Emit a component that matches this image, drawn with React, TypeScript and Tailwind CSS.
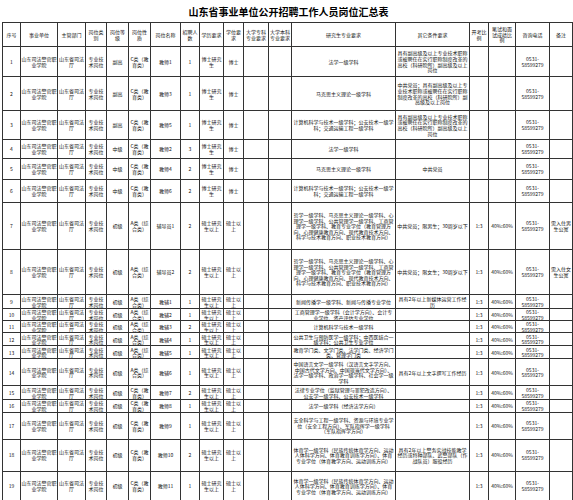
const UNIT = "山东司法警官职业学院";
const DEPT = "山东省司法厅";
const KIND = "专业技术岗位";
const EDU = "C类（教育类）";
const GEN = "A类（综合类）";
const TEL = "0531-58599279";
const FG = "具有副高级及以上专业技术职称或被聘任在实行职称制度改革的高校（科研院所）副高级及以上岗位";
const CS = "计算机科学与技术一级学科；公安技术一级学科；交通运输工程一级学科";
const FDY =
  "哲学一级学科、马克思主义理论一级学科、心理学一级学科、公共管理学一级学科、工商管理学一级学科、教育专业学位（教育管理方向、心理健康教育方向、现代教育技术方向、科学与技术教育方向、职业技术教育方向）";
const TY =
  "体育学一级学科（民族传统体育学方向、运动人体科学方向、体育教育训练学方向）、体育专业学位（体育教学方向、运动训练方向）";

type Row = {
  h: string;
  level: string;
  nature: string;
  name: string;
  num: string;
  xl: string;
  xw: string;
  yjs: string;
  other: string;
  ratio: string;
  score: string;
  note: string;
};

const BS = { xl: "博士研究生", xw: "博士" };
const SS = { xl: "硕士研究生以上", xw: "硕士以上" };

const rows: Row[] = [
  { h: "h-[30px]", level: "副高", nature: EDU, name: "教师1", num: "1", ...BS, yjs: "法学一级学科", other: FG, ratio: "", score: "", note: "" },
  { h: "h-[34px]", level: "副高", nature: EDU, name: "教师3", num: "1", ...BS, yjs: "马克思主义理论一级学科", other: "中共党员；" + FG, ratio: "", score: "", note: "" },
  { h: "h-[29px]", level: "副高", nature: EDU, name: "教师5", num: "1", ...BS, yjs: CS, other: FG, ratio: "", score: "", note: "" },
  { h: "h-[19px]", level: "中级", nature: EDU, name: "教师2", num: "3", ...BS, yjs: "法学一级学科", other: "", ratio: "", score: "", note: "" },
  { h: "h-[21px]", level: "中级", nature: EDU, name: "教师4", num: "2", ...BS, yjs: "马克思主义理论一级学科", other: "中共党员", ratio: "", score: "", note: "" },
  { h: "h-[23px]", level: "中级", nature: EDU, name: "教师6", num: "2", ...BS, yjs: CS, other: "", ratio: "", score: "", note: "" },
  { h: "h-[47px]", level: "初级", nature: GEN, name: "辅导员1", num: "2", ...SS, yjs: FDY, other: "中共党员；限男生；30周岁以下", ratio: "1:3", score: "40%:60%", note: "需入住男生公寓" },
  { h: "h-[45px]", level: "初级", nature: GEN, name: "辅导员2", num: "2", ...SS, yjs: FDY, other: "中共党员；限女生；30周岁以下", ratio: "1:3", score: "40%:60%", note: "需入住女生公寓" },
  { h: "h-[14px]", level: "初级", nature: GEN, name: "教辅1", num: "1", ...SS, yjs: "新闻传播学一级学科、新闻与传播专业学位", other: "具有2年以上新媒体运营工作经历", ratio: "1:3", score: "40%:60%", note: "" },
  { h: "h-[12px]", level: "初级", nature: GEN, name: "教辅2", num: "1", ...SS, yjs: "工商管理学一级学科（会计学方向）、会计专业学位、资产评估专业学位", other: "", ratio: "1:3", score: "40%:60%", note: "" },
  { h: "h-[12px]", level: "初级", nature: GEN, name: "教辅3", num: "2", ...SS, yjs: "计算机科学与技术一级学科", other: "", ratio: "1:3", score: "40%:60%", note: "" },
  { h: "h-[13px]", level: "初级", nature: GEN, name: "教辅4", num: "1", ...SS, yjs: "公共卫生与预防医学一级学科；中西医结合一级学科；公共卫生专业学位", other: "", ratio: "1:3", score: "40%:60%", note: "" },
  { h: "h-[13px]", level: "初级", nature: GEN, name: "教辅5", num: "1", ...SS, yjs: "教育学门类、文学门类、法学门类、经济学门类、管理学门类", other: "", ratio: "1:3", score: "40%:60%", note: "" },
  { h: "h-[27px]", level: "初级", nature: GEN, name: "教辅6", num: "1", ...SS, yjs: "中国语言文学一级学科（汉语言文字学方向、中国古代文学方向、中国现当代文学方向）、法学一级学科、政治学一级学科、社会学一级学科", other: "具有2年以上文字撰写工作经历", ratio: "1:3", score: "40%:60%", note: "" },
  { h: "h-[14px]", level: "初级", nature: EDU, name: "教师7", num: "2", ...SS, yjs: "法律专业学位（监狱管理与罪犯改造方向）、公安学一级学科、公安技术一级学科", other: "", ratio: "1:3", score: "40%:60%", note: "" },
  { h: "h-[12px]", level: "初级", nature: EDU, name: "教师8", num: "1", ...SS, yjs: "法学一级学科（经济法学方向）", other: "", ratio: "1:3", score: "40%:60%", note: "" },
  { h: "h-[27px]", level: "初级", nature: EDU, name: "教师9", num: "1", ...SS, yjs: "安全科学与工程一级学科、资源与环境专业学位（安全工程方向）、军队指挥学一级学科（军队指挥学方向）", other: "", ratio: "1:3", score: "40%:60%", note: "" },
  { h: "h-[32px]", level: "初级", nature: EDU, name: "教师10", num: "2", ...SS, yjs: TY, other: "具有2年以上警务实战技能教学经历或特种部队、武警部队（作战队员）服役经历", ratio: "1:3", score: "40%:60%", note: "" },
  { h: "h-[30px]", level: "初级", nature: EDU, name: "教师11", num: "1", ...SS, yjs: TY, other: "", ratio: "1:3", score: "40%:60%", note: "" },
];

const cols = [
  "w-[18px]", "w-[37px]", "w-[28px]", "w-[21px]", "w-[22px]", "w-[22px]", "w-[30px]", "w-[19px]", "w-[24px]",
  "w-[20px]", "w-[25px]", "w-[23px]", "w-[104px]", "w-[74px]", "w-[19px]", "w-[27px]", "w-[34px]", "w-[23px]",
];

const heads = [
  "序号", "事业单位", "主管部门", "岗位类别", "岗位等级", "岗位性质", "岗位名称", "招聘人数", "学历要求", "学位要求",
  "大学专科专业要求", "大学本科专业要求", "研究生专业要求", "其它条件要求", "开考比例", "笔试和面试成绩比例", "咨询电话", "备注",
];

const base = "border border-[#333] py-0 text-center align-middle overflow-hidden";
const td = `${base} px-[1px]`;
const tdTight = `${base} px-0`;

export default function App() {
  return (
    <div className="w-[573px] h-[500px] overflow-hidden bg-white text-[#111] font-['Noto_Sans_CJK_SC','Liberation_Sans',sans-serif]">
      <div className="h-[22px] flex items-center justify-center pl-[4px] pt-[1px] text-[10px] font-bold text-black">
        山东省事业单位公开招聘工作人员岗位汇总表
      </div>
      <table className="ml-[2px] w-[570px] table-fixed border-collapse text-[5px] leading-[5.6px]">
        <colgroup>
          {cols.map((c, i) => (
            <col key={i} className={c} />
          ))}
        </colgroup>
        <thead>
          <tr className="h-[24px]">
            {heads.map((h, i) => (
              <th key={i} className={`${td} font-normal`}>
                {h}
              </th>
            ))}
          </tr>
        </thead>
        <tbody>
          {rows.map((r, i) => (
            <tr key={i} className={r.h}>
              <td className={td}>{i + 1}</td>
              <td className={tdTight}>{UNIT}</td>
              <td className={td}>{DEPT}</td>
              <td className={td}>{KIND}</td>
              <td className={td}>{r.level}</td>
              <td className={td}>{r.nature}</td>
              <td className={td}>{r.name}</td>
              <td className={td}>{r.num}</td>
              <td className={td}>{r.xl}</td>
              <td className={td}>{r.xw}</td>
              <td className={td}></td>
              <td className={td}></td>
              <td className={td}>{r.yjs}</td>
              <td className={td}>{r.other}</td>
              <td className={td}>{r.ratio}</td>
              <td className={td}>{r.score}</td>
              <td className={td}>{TEL}</td>
              <td className={td}>{r.note}</td>
            </tr>
          ))}
        </tbody>
      </table>
    </div>
  );
}
